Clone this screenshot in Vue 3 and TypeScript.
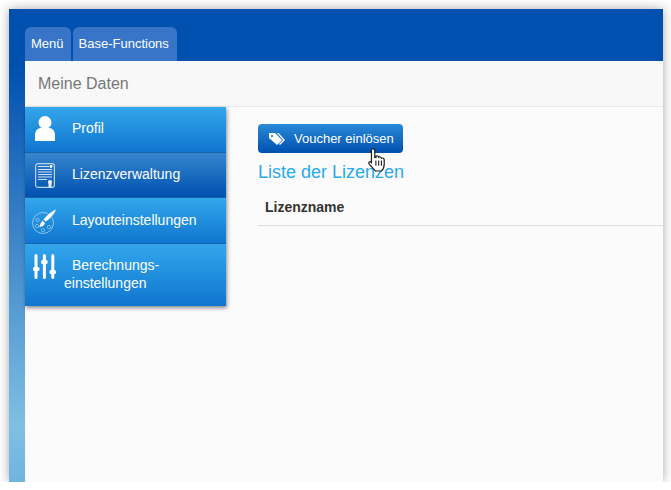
<script setup lang="ts">
interface MenuItem {
  label: string;
  icon: string;
  active?: boolean;
}

const tabs: string[] = ['Menü', 'Base-Functions']

const menu: MenuItem[] = [
  { label: 'Profil', icon: 'user' },
  { label: 'Lizenzverwaltung', icon: 'license', active: true },
  { label: 'Layouteinstellungen', icon: 'palette' },
  { label: 'Berechnungs-', icon: 'sliders' }
]
</script>

<template>
  <div class="window">
    <div class="topbar">
      <a v-for="tab in tabs" :key="tab" class="tab">{{ tab }}</a>
    </div>
    <div class="page">
      <div class="page-title">Meine Daten</div>
      <div class="body">
        <nav class="menu">
          <div
            v-for="item in menu"
            :key="item.label"
            class="menu-item"
            :class="[item.icon, { active: item.active }]"
          >
            <svg v-if="item.icon === 'user'" class="icon" viewBox="0 0 20 25" width="20" height="25">
              <circle cx="10" cy="6.500" r="6.500" fill="#fff" />
              <path d="M0 25v-6c0-4 2.500-7 6-7h8c3.500 0 6 3 6 7v6z" fill="#fff" />
            </svg>
            <svg v-else-if="item.icon === 'license'" class="icon" viewBox="0 0 20 25" width="20" height="25">
              <rect x=".6" y=".6" width="18.800" height="23.800" rx="2.500" fill="none" stroke="#b9d4ef" stroke-width="1.200" />
              <path d="M3 3.500h11M3 6.500h14M3 9h14M3 11.500h14M3 14h14M3 16.500h9" stroke="#e6f0fa" stroke-width=".9" />
              <circle cx="16" cy="3.500" r="1.400" fill="#fff" />
              <circle cx="15" cy="19" r="2" fill="#fff" />
              <path d="M13.500 20v4.500h3V20z" fill="#e4eef8" />
            </svg>
            <svg v-else-if="item.icon === 'palette'" class="icon" viewBox="0 0 24 25" width="24" height="25">
              <circle cx="11" cy="14" r="10.500" fill="none" stroke="#8cc6ef" stroke-width="1" />
              <circle cx="5.500" cy="11" r="1.700" fill="none" stroke="#8cc6ef" stroke-width=".8" />
              <circle cx="5" cy="17" r="1.700" fill="none" stroke="#8cc6ef" stroke-width=".8" />
              <circle cx="11" cy="21" r="1.700" fill="none" stroke="#8cc6ef" stroke-width=".8" />
              <circle cx="17" cy="18" r="1.700" fill="none" stroke="#8cc6ef" stroke-width=".8" />
              <path d="M24 .5c-1.500 4-6 9.500-10.500 12l-2-2C14.500 6.500 20 2 24 .5z" fill="#fff" />
              <path d="M10.500 11.500l2.500 2.500c-.5 2.500-3 4-6 4 1.500-1.500 1.500-5 3.500-6.500z" fill="#fff" />
            </svg>
            <svg v-else class="icon" viewBox="0 0 23 25" width="23" height="25">
              <path d="M3 1.500v22M11.400 1.500v22M19.800 1.500v22" stroke="#fff" stroke-width="3" stroke-linecap="round" />
              <rect x="0" y="13" width="6.500" height="4" rx="1.500" fill="#fff" />
              <rect x="8.100" y="6" width="6.500" height="4" rx="1.500" fill="#fff" />
              <rect x="16.500" y="16" width="6.500" height="4" rx="1.500" fill="#fff" />
            </svg>
            <span class="label" v-if="item.icon !== 'sliders'">{{ item.label }}</span>
            <span class="label wrap" v-else>
              <span class="first">Berechnungs-</span>
              <span>einstellungen</span>
            </span>
          </div>
        </nav>
        <main class="content">
          <button class="voucher">
            <svg viewBox="0 0 18 14" width="18" height="14">
              <path d="M1 1h6l7 7-5 5-8-7z" fill="#fff" />
              <circle cx="4" cy="4" r="1.100" fill="#1a6cc4" />
              <path d="M9 1h1.500l6.500 7-5 5-1-1 4-4z" fill="#fff" />
            </svg>
            Voucher einlösen
          </button>
          <h3 class="list-title">Liste der Lizenzen</h3>
          <div class="table-head">Lizenzname</div>
          <svg class="cursor" viewBox="0 0 18 24" width="20" height="25" preserveAspectRatio="none">
            <path
              d="M5 1.500c1 0 2 .8 2 2V10l1 .2V8.800c1.200-.8 2.300 0 2.500 1 .9-.7 2.200-.3 2.500 1 1-.6 2.500 0 2.500 1.500v4c0 3-1.500 5.700-2.500 6.700H7.500L2 16.500c-.8-1.200-.5-2.300 1-2.500l1 1V3.500c0-1.200.2-2 1-2z"
              fill="#fff"
              stroke="#222"
              stroke-width="1.100"
            />
            <path d="M8 13v5M10.500 13v5M13 13v5" stroke="#222" stroke-width="1" />
          </svg>
        </main>
      </div>
    </div>
  </div>
</template>

<style>
html, body { margin: 0; background: #fff; }
</style>

<style scoped>
.window {
  position: relative;
  margin: 9px 0 0 9px;
  width: 654px;
  height: 473px;
  padding-left: 16px;
  box-sizing: border-box;
  display: flex;
  flex-direction: column;
  font-family: "Liberation Sans", Arial, sans-serif;
  background: linear-gradient(to bottom, #0050b0 0, #0050b0 12%, #7fbfe3 88%, #6fb4e0 100%);
  box-shadow: 0 0 10px rgba(0, 0, 0, 0.35);
}
.topbar {
  margin-left: -16px;
  height: 52px;
  background: #0050b0;
  padding: 18px 0 0 16px;
  box-sizing: border-box;
  display: flex;
  gap: 2px;
}
.tab {
  background: #3875c9;
  color: #fff;
  font-size: 13px;
  padding: 0 8px 0 6px;
  border-radius: 6px 6px 0 0;
  line-height: 33px;
  height: 34px;
}
.tab:first-child {
  padding-right: 7px;
}
.page {
  flex: 1;
  background: #fbfbfb;
  display: flex;
  flex-direction: column;
}
.page-title {
  height: 45px;
  line-height: 45px;
  padding-left: 13px;
  font-size: 16px;
  color: #777;
  background: #f8f8f8;
  border-bottom: 1px solid #e7e7e7;
}
.body {
  display: flex;
  flex: 1;
}
.menu {
  width: 201px;
  align-self: flex-start;
  box-shadow: 1px 2px 4px rgba(0, 0, 0, 0.45);
}
.menu-item {
  position: relative;
  height: 45.500px;
  box-sizing: border-box;
  padding: 0 0 2px 47px;
  display: flex;
  align-items: center;
  color: #fff;
  font-size: 14px;
  background: linear-gradient(to bottom, #33a6ec, #0f76cf);
  border-bottom: 1px solid #1663a8;
}
.menu-item.palette {
  padding-bottom: 0;
}
.menu-item.active {
  background: linear-gradient(to bottom, #3586cd, #0050b0);
}
.menu-item.sliders {
  height: 62.500px;
  align-items: flex-start;
  padding-bottom: 0;
  border-bottom: 0;
}
.icon {
  position: absolute;
  left: 10px;
  top: 9px;
}
.menu-item.license .icon { top: 10px; }
.menu-item.palette .icon { left: 7px; top: 11px; }
.menu-item.sliders .icon { left: 8px; top: 10px; }
.label.wrap {
  display: flex;
  flex-direction: column;
  line-height: 18px;
  padding-top: 12px;
  margin-left: -8px;
}
.label.wrap .first {
  margin-left: 8px;
}
.content {
  position: relative;
  flex: 1;
  padding: 17px 0 0 32px;
}
.voucher {
  display: flex;
  align-items: center;
  gap: 8px;
  width: 145px;
  height: 29px;
  padding: 0 0 0 10px;
  border: 0;
  border-radius: 4px;
  background: linear-gradient(to bottom, #2a8ad8, #0050b0);
  color: #fff;
  font-family: inherit;
  font-size: 13px;
}
.list-title {
  margin: 9px 0 0;
  font-size: 18px;
  font-weight: 400;
  line-height: 20px;
  color: #29aaef;
}
.table-head {
  margin-top: 6px;
  height: 37px;
  line-height: 38px;
  padding-left: 7px;
  font-size: 14px;
  font-weight: 700;
  color: #333;
  border-bottom: 1px solid #ddd;
}
.cursor {
  position: absolute;
  left: 141px;
  top: 40px;
}
</style>
